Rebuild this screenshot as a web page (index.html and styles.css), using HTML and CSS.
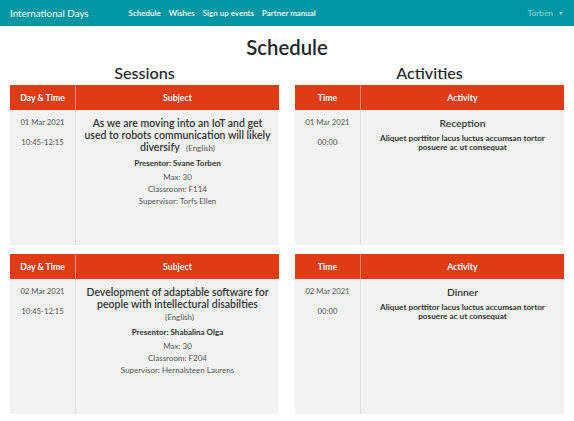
FILE: index.html
```html
<!DOCTYPE html>
<html>
<head>
<meta charset="utf-8">
<link rel="stylesheet" href="styles.css">
</head>
<body>
<nav class="navbar">
  <a class="brand">International Days</a>
  <ul class="nav-links">
    <li>Schedule</li>
    <li>Wishes</li>
    <li>Sign up events</li>
    <li>Partner manual</li>
  </ul>
  <div class="user">Torben <span class="caret"></span></div>
</nav>
<main class="page">
  <h1 class="title">Schedule</h1>
  <div class="columns">
    <section class="col">
      <h2 class="col-title">Sessions</h2>
      <div class="card">
        <div class="head"><div class="c1">Day &amp; Time</div><div class="c2">Subject</div></div>
        <div class="body">
          <div class="c1"><p>01 Mar 2021</p><p>10:45-12:15</p></div>
          <div class="c2">
            <div class="subj">As we are moving into an IoT and get used to robots communication will likely diversify <span class="lang">(English)</span></div>
            <div class="pres">Presentor: Svane Torben</div>
            <div class="meta">Max: 30<br>Classroom: F114<br>Supervisor: Torfs Ellen</div>
          </div>
        </div>
      </div>
      <div class="card">
        <div class="head"><div class="c1">Day &amp; Time</div><div class="c2">Subject</div></div>
        <div class="body">
          <div class="c1"><p>02 Mar 2021</p><p>10:45-12:15</p></div>
          <div class="c2">
            <div class="subj">Development of adaptable software for people with intellectural disabilties <span class="lang">(English)</span></div>
            <div class="pres">Presentor: Shabalina Olga</div>
            <div class="meta">Max: 30<br>Classroom: F204<br>Supervisor: Hernalsteen Laurens</div>
          </div>
        </div>
      </div>
    </section>
    <section class="col">
      <h2 class="col-title">Activities</h2>
      <div class="card">
        <div class="head"><div class="c1">Time</div><div class="c2">Activity</div></div>
        <div class="body">
          <div class="c1"><p>01 Mar 2021</p><p>00:00</p></div>
          <div class="c2 act-cell">
            <div class="act">Reception</div>
            <div class="desc">Aliquet porttitor lacus luctus accumsan tortor posuere ac ut consequat</div>
          </div>
        </div>
      </div>
      <div class="card">
        <div class="head"><div class="c1">Time</div><div class="c2">Activity</div></div>
        <div class="body">
          <div class="c1"><p>02 Mar 2021</p><p>00:00</p></div>
          <div class="c2 act-cell">
            <div class="act">Dinner</div>
            <div class="desc">Aliquet porttitor lacus luctus accumsan tortor posuere ac ut consequat</div>
          </div>
        </div>
      </div>
    </section>
  </div>
</main>
</body>
</html>
```

FILE: styles.css
```css
* { box-sizing: border-box; }
body {
  margin: 0;
  font-family: "Lato", "Open Sans", sans-serif;
  color: #212529;
  background: #fff;
}
.navbar {
  height: 26px;
  background: #0097a2;
  display: flex;
  align-items: center;
  padding: 0 10px;
}
.brand {
  color: #fff;
  font-size: 9.8px;
  margin-right: 40px;
}
.nav-links {
  list-style: none;
  margin: 0;
  padding: 0;
  display: flex;
  gap: 8px;
  color: #fff;
  font-size: 8px;
  font-weight: 600;
}
.user {
  margin-left: auto;
  margin-right: 1px;
  color: rgba(255,255,255,0.5);
  font-size: 8.3px;
  font-weight: 600;
  display: flex;
  align-items: center;
  gap: 6px;
}
.caret {
  width: 0; height: 0;
  border-left: 2.5px solid transparent;
  border-right: 2.5px solid transparent;
  border-top: 3px solid rgba(255,255,255,0.6);
}
.page { padding: 0 10px; }
.title {
  margin: 8px 0 0;
  text-align: center;
  font-size: 20.3px;
  font-weight: 600;
  line-height: 26px;
}
.columns {
  display: grid;
  grid-template-columns: 1fr 1fr;
  gap: 16px;
}
.col { display: flex; flex-direction: column; gap: 9px; }
.col-title {
  margin: 2.5px 0 -6.5px;
  text-align: center;
  font-size: 16.2px;
  font-weight: 500;
  line-height: 20px;
}
.card { display: flex; flex-direction: column; }
.head {
  display: grid;
  grid-template-columns: 66px 1fr;
  background: #e03b12;
  color: #fff;
  font-size: 8.7px;
  font-weight: 700;
  height: 25px;
}
.head > div {
  display: flex; align-items: center; justify-content: center;
}
.head .c1 { border-right: 1px solid #ec8a70; }
.body {
  display: grid;
  grid-template-columns: 66px 1fr;
  background: #f2f2f2;
  height: 135px;
  text-align: center;
}
.body .c1 {
  border-right: 1px solid #dedede;
  padding-top: 6.5px;
  font-size: 7.7px;
  color: #555;
}
.body .c1 p { margin: 0 0 9px; line-height: 11px; }
.body .c2 { padding: 6.5px 5px 0; }
.body .act-cell { padding: 6.5px 14px 0; }
.subj {
  font-size: 10.5px;
  font-weight: 600;
  line-height: 12px;
  color: #333;
}
.lang { font-size: 8px; font-weight: 400; color: #555; margin-left: 4px; }
.pres {
  font-size: 8px;
  font-weight: 700;
  color: #333;
  margin-top: 4px;
  line-height: 10px;
}
.meta {
  font-size: 8px;
  color: #555;
  line-height: 12px;
  margin-top: 3px;
}
.act {
  font-size: 10.3px;
  font-weight: 600;
  color: #333;
  line-height: 12px;
}
.desc {
  font-size: 8.2px;
  font-weight: 700;
  color: #333;
  line-height: 9.5px;
  margin-top: 5px;
}
```
